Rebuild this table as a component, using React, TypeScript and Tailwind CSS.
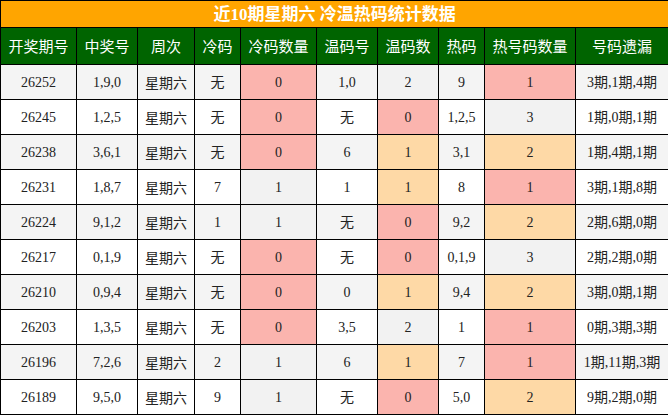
const heads = ['开奖期号', '中奖号', '周次', '冷码', '冷码数量', '温码号', '温码数', '热码', '热号码数量', '号码遗漏'];
const widths = ['w-[76px]', 'w-[61px]', 'w-[57px]', 'w-[46px]', 'w-[76px]', 'w-[61px]', 'w-[61px]', 'w-[46px]', 'w-[91px]', 'w-[93px]'];

const rows = [
  ['26252', '1,9,0', '无', '0', '1,0', '2', '9', '1', '3期,1期,4期'],
  ['26245', '1,2,5', '无', '0', '无', '0', '1,2,5', '3', '1期,0期,1期'],
  ['26238', '3,6,1', '无', '0', '6', '1', '3,1', '2', '1期,4期,1期'],
  ['26231', '1,8,7', '7', '1', '1', '1', '8', '1', '3期,1期,8期'],
  ['26224', '9,1,2', '1', '1', '无', '0', '9,2', '2', '2期,6期,0期'],
  ['26217', '0,1,9', '无', '0', '无', '0', '0,1,9', '3', '2期,2期,0期'],
  ['26210', '0,9,4', '无', '0', '0', '1', '9,4', '2', '3期,0期,1期'],
  ['26203', '1,3,5', '无', '0', '3,5', '2', '1', '1', '0期,3期,3期'],
  ['26196', '7,2,6', '2', '1', '6', '1', '7', '1', '1期,11期,3期'],
  ['26189', '9,5,0', '9', '1', '无', '0', '5,0', '2', '9期,2期,0期'],
];

const PINK = 'bg-[#fbb4ae]';
const PEACH = 'bg-[#fed9a6]';
const GRAY = 'bg-[#f2f2f2]';

const coldBg: Record<string, string> = { '0': PINK, '1': GRAY };
const warmBg: Record<string, string> = { '0': PINK, '1': PEACH, '2': GRAY };
const hotBg: Record<string, string> = { '1': PINK, '2': PEACH, '3': GRAY };

const cell = 'border border-black text-center p-0 h-[35px] text-[14px]';

export default function App() {
  return (
    <div className="w-[668px] h-[415px] bg-white overflow-hidden font-['Liberation_Serif','Noto_Sans_CJK_SC',serif] text-[#222]">
      <table className="w-[668px] table-fixed border-collapse">
        <colgroup>
          {widths.map((w, i) => (
            <col key={i} className={w} />
          ))}
        </colgroup>
        <thead>
          <tr>
            <th
              colSpan={10}
              className="border border-black bg-[#ffa500] h-[27px] p-0 text-white text-[17px] font-bold leading-none"
            >
              近10期星期六 冷温热码统计数据
            </th>
          </tr>
          <tr className="bg-[#006400]">
            {heads.map((h) => (
              <th
                key={h}
                className="border border-black h-[37px] p-0 text-white text-[15px] font-normal font-['Noto_Sans_CJK_SC',sans-serif]"
              >
                {h}
              </th>
            ))}
          </tr>
        </thead>
        <tbody>
          {rows.map((r, i) => {
            const rowBg = i % 2 === 0 ? 'bg-[#f4f4f4]' : 'bg-white';
            return (
              <tr key={r[0]} className={rowBg}>
                <td className={cell}>{r[0]}</td>
                <td className={cell}>{r[1]}</td>
                <td className={`${cell} font-['Noto_Sans_CJK_SC',sans-serif]`}>星期六</td>
                <td className={cell}>{r[2]}</td>
                <td className={`${cell} ${coldBg[r[3]]}`}>{r[3]}</td>
                <td className={cell}>{r[4]}</td>
                <td className={`${cell} ${warmBg[r[5]]}`}>{r[5]}</td>
                <td className={cell}>{r[6]}</td>
                <td className={`${cell} ${hotBg[r[7]]}`}>{r[7]}</td>
                <td className={cell}>{r[8]}</td>
              </tr>
            );
          })}
        </tbody>
      </table>
    </div>
  );
}
